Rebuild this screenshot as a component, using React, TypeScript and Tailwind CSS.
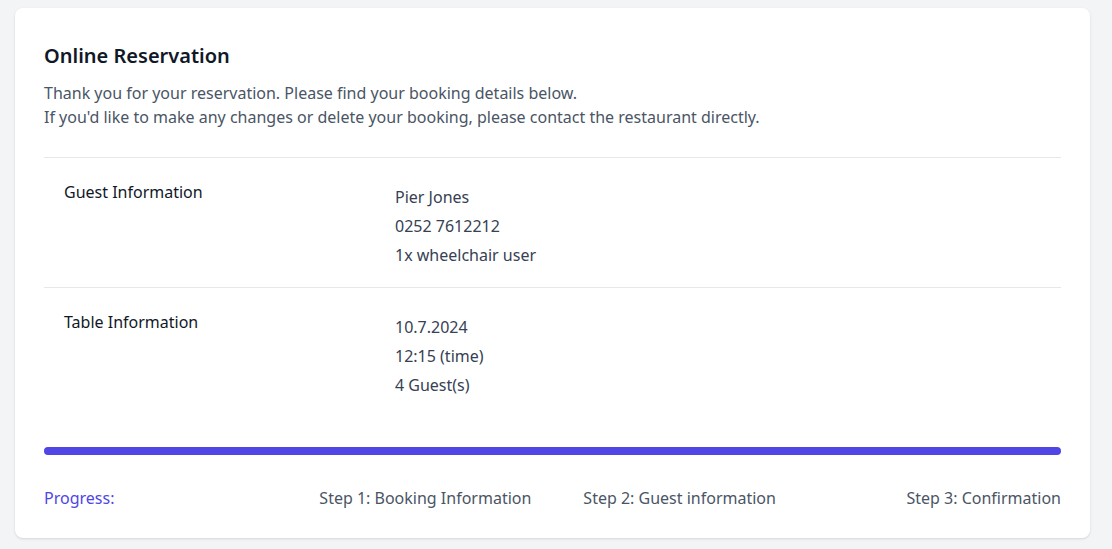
const guest = ["Pier Jones", "0252 7612212", "1x wheelchair user"];
const table = ["10.7.2024", "12:15 (time)", "4 Guest(s)"];

function InfoRow({ label, values, last }: { label: string; values: string[]; last?: boolean }) {
  return (
    <div
      className={
        "grid grid-cols-3 gap-4 px-5 pt-[22px] " +
        (last ? "pb-[47px]" : "border-b border-gray-200 pb-[17px]")
      }
    >
      <dt className="text-base leading-6 text-gray-900">{label}</dt>
      <dd className="col-span-2 mt-[3px] text-base leading-[29px] text-gray-700">
        {values.map((v) => (
          <div key={v}>{v}</div>
        ))}
      </dd>
    </div>
  );
}

export default function App() {
  return (
    <div
      className="min-h-screen bg-gray-100 pl-[15px] pr-[22px] pt-2"
      style={{ fontFamily: '"Noto Sans", sans-serif' }}
    >
      <div className="rounded-lg bg-white px-[29px] pb-[28px] pt-[34px] shadow">
        <h1 className="text-xl font-semibold leading-7 text-gray-900">Online Reservation</h1>
        <p className="mt-[11px] text-base leading-6 text-gray-600">
          Thank you for your reservation. Please find your booking details below.
          <br />
          If you'd like to make any changes or delete your booking, please contact the restaurant directly.
        </p>

        <dl className="mt-7 border-t border-gray-200">
          <InfoRow label="Guest Information" values={guest} />
          <InfoRow label="Table Information" values={table} last />
        </dl>

        <div className="h-2 rounded-full bg-[#4f46e5]" />

        <div className="mt-[31px] grid grid-cols-4 text-base leading-6 text-gray-600">
          <div className="text-[#4f46e5]">Progress:</div>
          <div className="text-center">Step 1: Booking Information</div>
          <div className="text-center">Step 2: Guest information</div>
          <div className="text-right">Step 3: Confirmation</div>
        </div>
      </div>
    </div>
  );
}
